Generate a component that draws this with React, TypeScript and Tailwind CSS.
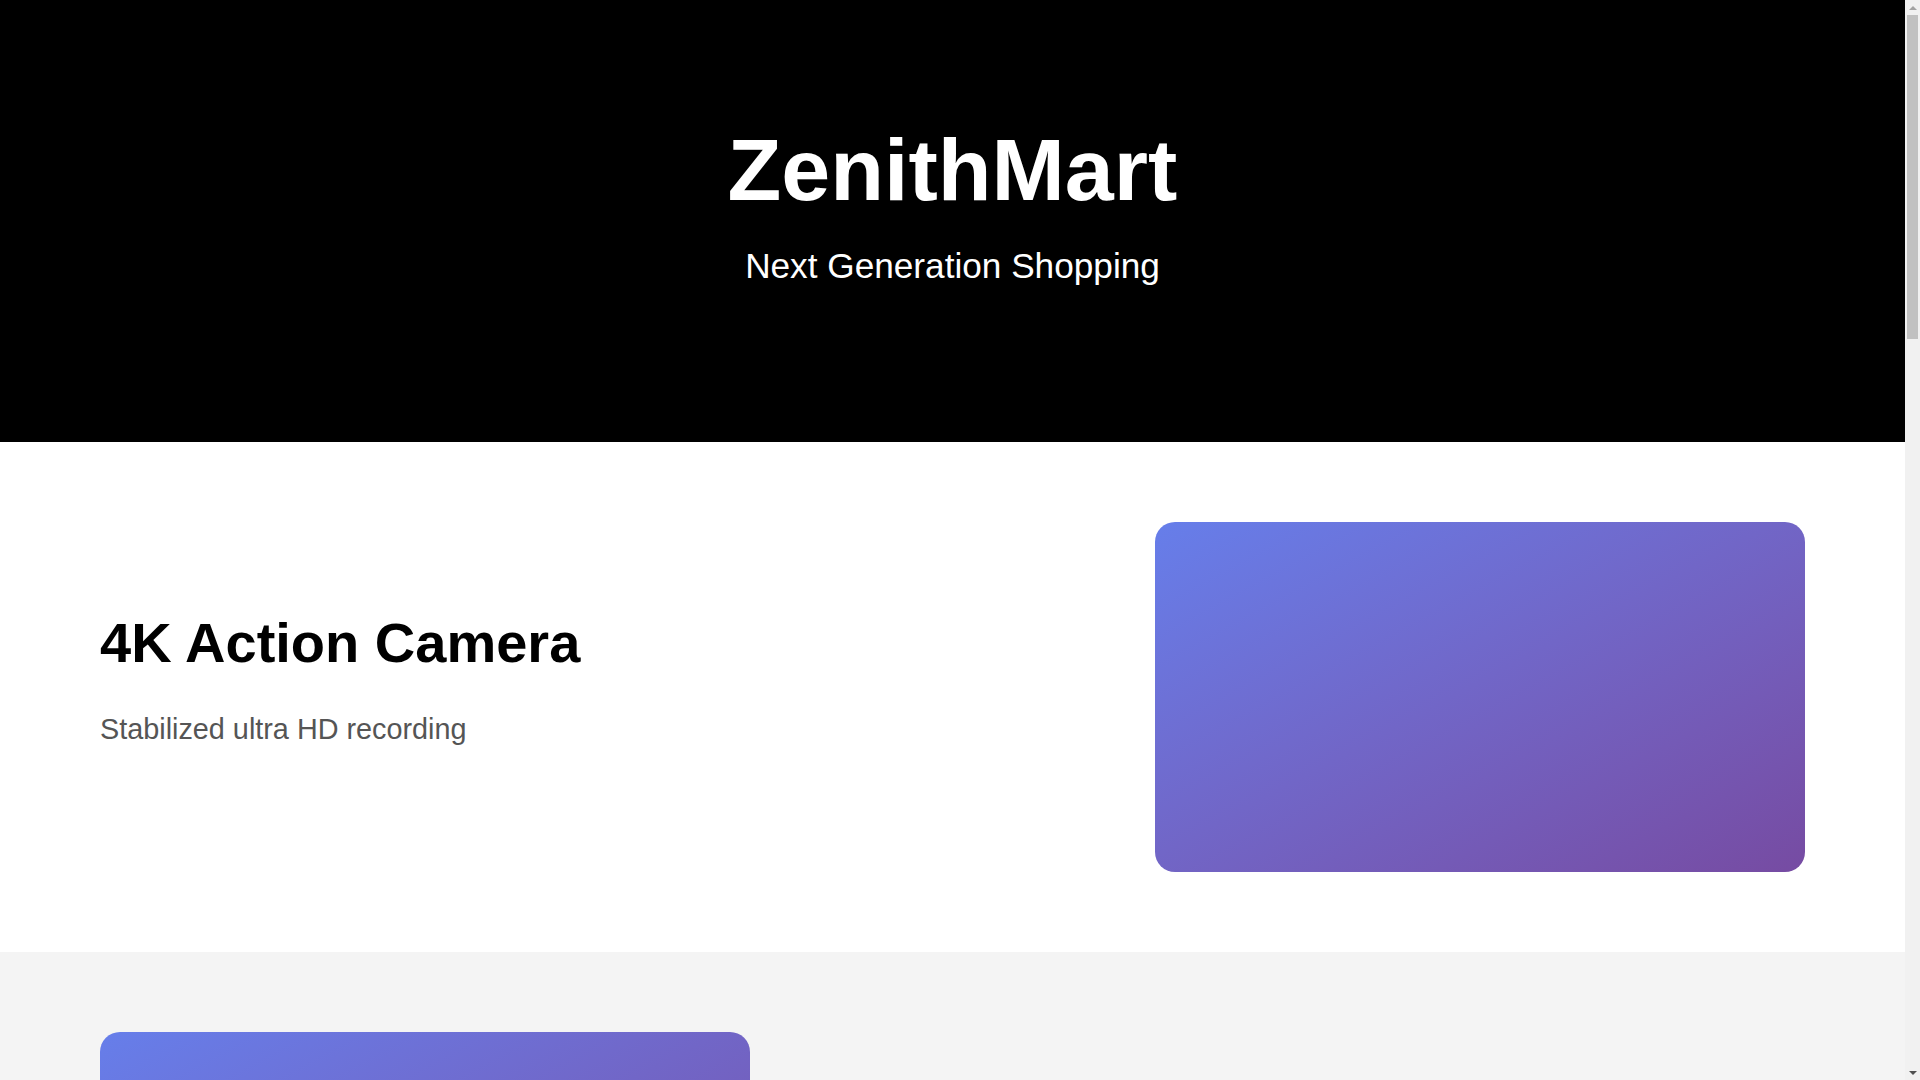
const products = [
  { name: "4K Action Camera", description: "Stabilized ultra HD recording" },
  { name: "Wireless Earbuds Pro", description: "Immersive sound, all day battery" },
  { name: "Smart Fitness Watch", description: "Track every move you make" },
  { name: "Portable Projector", description: "Cinema experience anywhere" },
  { name: "Mechanical Keyboard", description: "Tactile precision for every keystroke" },
  { name: "Drone Explorer X", description: "Capture the world from above" },
];

const ProductRow = ({
  name,
  description,
  index,
}: {
  name: string;
  description: string;
  index: number;
}) => {
  const odd = index % 2 === 1;
  return (
    <section className={`${odd ? "bg-[#f4f4f4]" : "bg-white"} px-[100px] py-20`}>
      <div
        className={`flex items-center justify-between gap-16 ${
          odd ? "flex-row-reverse" : ""
        }`}
      >
        <div className="flex flex-col">
          <h2 className="text-[56px] font-bold leading-[1.2] text-black mb-[30px]">
            {name}
          </h2>
          <p className="text-[28.8px] leading-[1.6] text-[#555] mb-[33px]">
            {description}
          </p>
        </div>
        <div className="w-[650px] h-[350px] shrink-0 rounded-[20px] bg-gradient-to-br from-[#667eea] to-[#764ba2]" />
      </div>
    </section>
  );
};

// page-level scrollbar, drawn because the browser hides its own
const Scrollbar = () => (
  <div className="w-[15px] shrink-0 h-full flex flex-col bg-[#f1f1f1]">
    <div className="h-[15px] flex items-center justify-center">
      <div className="w-0 h-0 border-l-[4px] border-r-[4px] border-b-[4px] border-l-transparent border-r-transparent border-b-[#a3a3a3]" />
    </div>
    <div className="flex-1 px-[2px]">
      <div className="h-[324px] bg-[#c1c1c1]" />
    </div>
    <div className="h-[15px] flex items-center justify-center">
      <div className="w-0 h-0 border-l-[4px] border-r-[4px] border-t-[4px] border-l-transparent border-r-transparent border-t-[#505050]" />
    </div>
  </div>
);

export default function App() {
  return (
    <div className="h-screen flex overflow-hidden bg-white font-['Liberation_Sans',Arial,sans-serif]">
      <div className="flex-1 min-w-0 overflow-y-auto [scrollbar-width:none]">
        <header className="bg-black text-white text-center pt-[117px] pb-[148px]">
          <h1 className="text-[88px] font-bold leading-[1.2] mb-[15px]">
            ZenithMart
          </h1>
          <p className="text-[35.2px] leading-[1.6]">Next Generation Shopping</p>
        </header>
        <main>
          {products.map((p, i) => (
            <ProductRow key={p.name} index={i} {...p} />
          ))}
        </main>
      </div>
      <Scrollbar />
    </div>
  );
}
